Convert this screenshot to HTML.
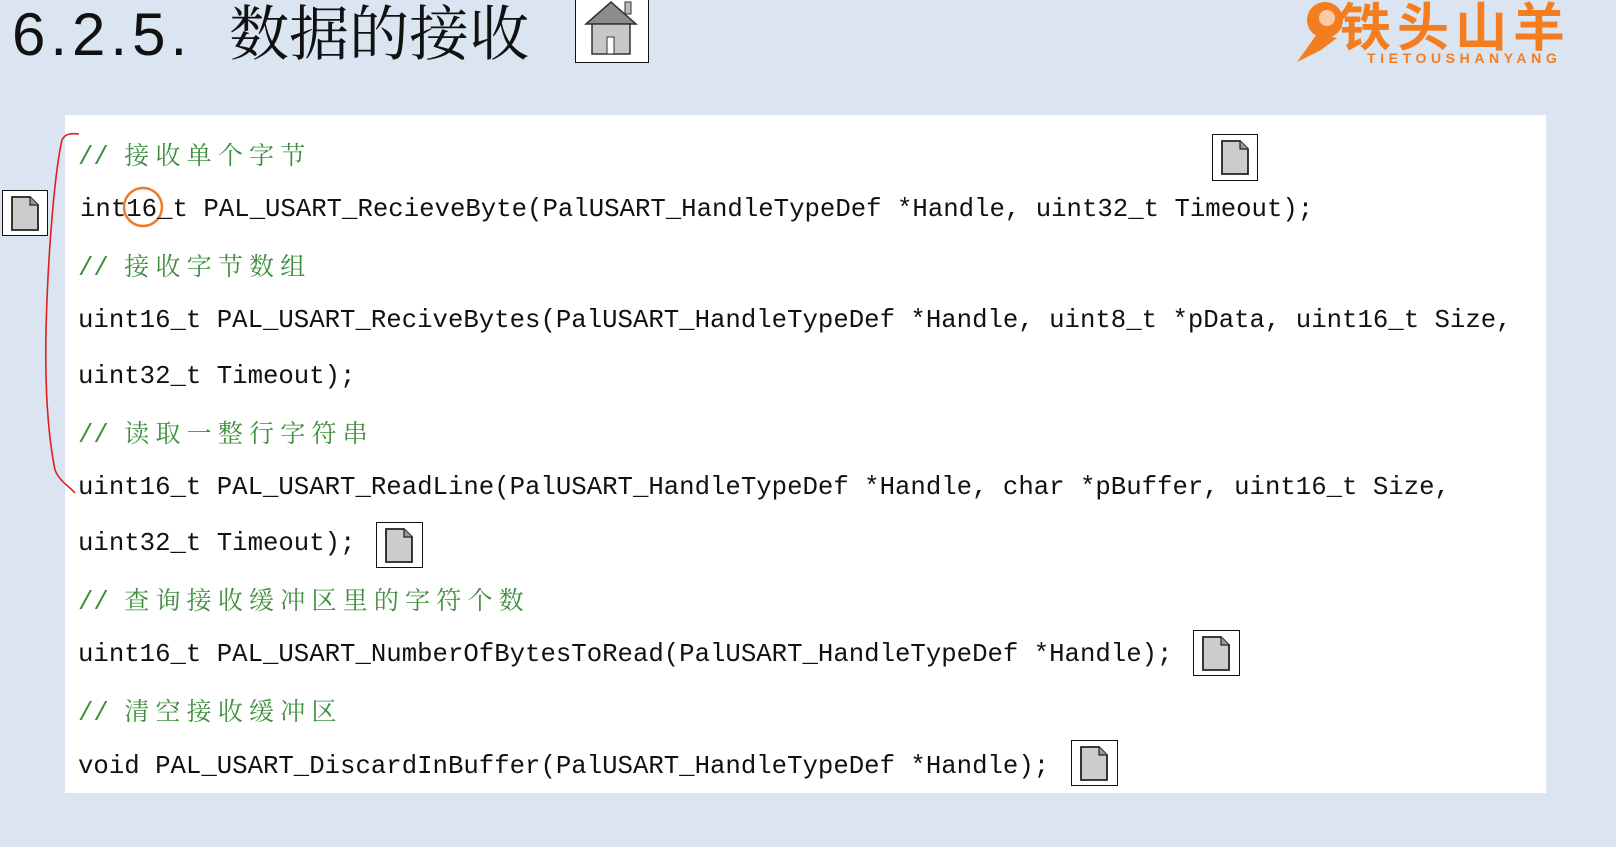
<!DOCTYPE html>
<html><head><meta charset="utf-8"><style>
html,body{margin:0;padding:0}
body{width:1616px;height:847px;background:#dbe4f1;position:relative;overflow:hidden;font-family:"Liberation Mono","Noto Sans CJK SC",monospace}
.title{position:absolute;left:12px;top:-6px;font-size:60px;line-height:72px;color:#111;white-space:nowrap}
.title .n{font-family:"Liberation Sans",sans-serif;letter-spacing:5px}
.title .c{font-family:"Noto Serif CJK SC","Noto Sans CJK SC",serif;letter-spacing:0px;margin-left:37px}
.panel{position:absolute;left:65px;top:115px;width:1481px;height:678px;background:#fff}
.l{position:absolute;left:78px;height:36px;line-height:36px;font-size:25.7px;color:#111;white-space:pre}
.cm{color:#3f8f3f}
.cm .z{font-family:"Noto Serif CJK SC","Noto Sans CJK SC",serif;font-size:25px;letter-spacing:6.2px}
.doc{position:absolute;width:44px;height:44px;border:1.5px solid #111;background:#fff;box-sizing:border-box}
.doc svg{position:absolute;left:8px;top:5px}
</style></head><body>
<div class="title"><span class="n">6.2.5.</span><span class="c">数据的接收</span></div>
<div class="doc" style="left:575px;top:-2px;width:74px;height:65px">
<svg width="74" height="62" viewBox="0 0 74 62" style="left:0;top:0"><path d="M10 25 L35 3 L60 25 Z" fill="#8c8c8c" stroke="#333" stroke-width="1.5"/><rect x="49" y="3" width="6" height="12" fill="#bbb" stroke="#333"/><rect x="16" y="25" width="38" height="30" fill="#c8c8c8" stroke="#333" stroke-width="1.5"/><rect x="31" y="38" width="7" height="17" fill="#fff" stroke="#333"/></svg></div>
<div style="position:absolute;left:1295px;top:0;width:300px;height:66px">
<svg width="300" height="66" viewBox="0 0 300 66"><circle cx="30" cy="20" r="18" fill="#f47d20"/><circle cx="32" cy="18" r="8" fill="#fff" opacity=".6"/><path d="M2 62 L22 34 L42 38 L26 50 Z" fill="#f47d20"/>
<text x="44" y="46" font-family="Noto Sans CJK SC" font-weight="bold" font-size="52" fill="#f47d20" letter-spacing="6">铁头山羊</text>
<text x="72" y="63" font-family="Liberation Sans" font-weight="bold" font-size="14" fill="#f47d20" letter-spacing="4.6">TIETOUSHANYANG</text></svg></div>
<div class="panel"></div>
<svg style="position:absolute;left:0;top:0" width="200" height="847"><path d="M79 134 C70 133 65 134 62 140 C55 170 48 250 46 330 C45 380 47 430 55 470 C60 482 68 485 75 493" fill="none" stroke="#e02020" stroke-width="1.6"/><circle cx="143" cy="207" r="19" fill="none" stroke="#f07a2a" stroke-width="2.5"/></svg>

<div class="l cm" style="top:136px"><span>// </span><span class="z">接收单个字节</span></div>
<div class="l" style="top:192px;left:80px">int16_t PAL_USART_RecieveByte(PalUSART_HandleTypeDef *Handle, uint32_t Timeout);</div>
<div class="l cm" style="top:247px"><span>// </span><span class="z">接收字节数组</span></div>
<div class="l" style="top:303px">uint16_t PAL_USART_ReciveBytes(PalUSART_HandleTypeDef *Handle, uint8_t *pData, uint16_t Size,</div>
<div class="l" style="top:359px">uint32_t Timeout);</div>
<div class="l cm" style="top:414px"><span>// </span><span class="z">读取一整行字符串</span></div>
<div class="l" style="top:470px">uint16_t PAL_USART_ReadLine(PalUSART_HandleTypeDef *Handle, char *pBuffer, uint16_t Size,</div>
<div class="l" style="top:526px">uint32_t Timeout);</div>
<div class="l cm" style="top:581px"><span>// </span><span class="z">查询接收缓冲区里的字符个数</span></div>
<div class="l" style="top:637px">uint16_t PAL_USART_NumberOfBytesToRead(PalUSART_HandleTypeDef *Handle);</div>
<div class="l cm" style="top:692px"><span>// </span><span class="z">清空接收缓冲区</span></div>
<div class="l" style="top:749px">void PAL_USART_DiscardInBuffer(PalUSART_HandleTypeDef *Handle);</div>

<div class="doc" style="left:1212px;top:134px;width:46px;height:47px"><svg width="28" height="35" viewBox="0 0 28 35"><path d="M1 1 H19 L27 9 V34 H1 Z" fill="#ccc" stroke="#222" stroke-width="1.8"/><path d="M19 1 V9 H27" fill="#999" stroke="#222" stroke-width="1.2"/></svg></div>
<div class="doc" style="left:2px;top:190px;width:46px;height:46px"><svg width="28" height="35" viewBox="0 0 28 35"><path d="M1 1 H19 L27 9 V34 H1 Z" fill="#ccc" stroke="#222" stroke-width="1.8"/><path d="M19 1 V9 H27" fill="#999" stroke="#222" stroke-width="1.2"/></svg></div>
<div class="doc" style="left:376px;top:522px;width:47px;height:46px"><svg width="28" height="35" viewBox="0 0 28 35"><path d="M1 1 H19 L27 9 V34 H1 Z" fill="#ccc" stroke="#222" stroke-width="1.8"/><path d="M19 1 V9 H27" fill="#999" stroke="#222" stroke-width="1.2"/></svg></div>
<div class="doc" style="left:1193px;top:630px;width:47px;height:46px"><svg width="28" height="35" viewBox="0 0 28 35"><path d="M1 1 H19 L27 9 V34 H1 Z" fill="#ccc" stroke="#222" stroke-width="1.8"/><path d="M19 1 V9 H27" fill="#999" stroke="#222" stroke-width="1.2"/></svg></div>
<div class="doc" style="left:1071px;top:740px;width:47px;height:46px"><svg width="28" height="35" viewBox="0 0 28 35"><path d="M1 1 H19 L27 9 V34 H1 Z" fill="#ccc" stroke="#222" stroke-width="1.8"/><path d="M19 1 V9 H27" fill="#999" stroke="#222" stroke-width="1.2"/></svg></div>
</body></html>
